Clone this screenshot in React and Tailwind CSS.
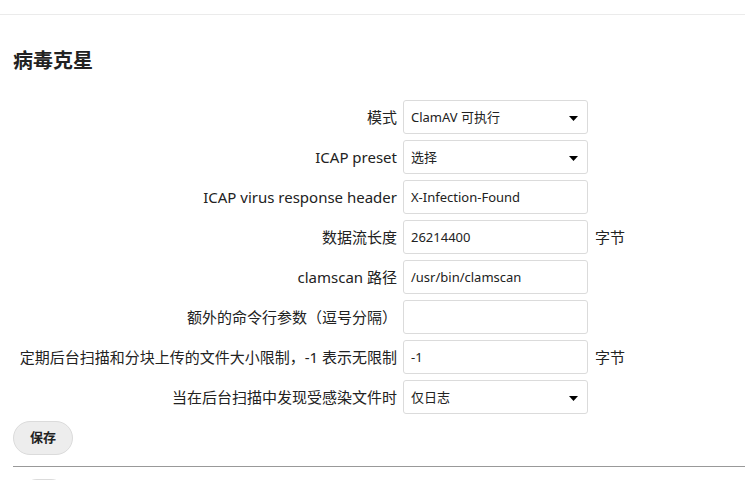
import React from "react";

const Caret = () => (
    <svg width="9" height="5" viewBox="0 0 9 5" className="absolute right-[9px] top-[15px]">
        <path d="M0 0h9L4.5 5z" fill="#000" />
    </svg>
);

const Field = ({ label, value, select, unit }) => (
    <div className="flex items-center">
        <label className="w-[396px] pr-[6px] text-right text-[15px] text-[#222]">{label}</label>
        <div className="relative my-[3px] flex h-[34px] w-[185px] items-center rounded-[3px] border border-[#dbdbdb] bg-white pl-[7px] pt-[1px] text-[13px] text-[#222]">
            <span>{value}</span>
            {select && <Caret />}
        </div>
        {unit && <span className="ml-[7px] text-[15px] text-[#222]">{unit}</span>}
    </div>
);

const fields = [
    { label: "模式", value: "ClamAV 可执行", select: true },
    { label: "ICAP preset", value: "选择", select: true },
    { label: "ICAP virus response header", value: "X-Infection-Found" },
    { label: "数据流长度", value: "26214400", unit: "字节" },
    { label: "clamscan 路径", value: "/usr/bin/clamscan" },
    { label: "额外的命令行参数（逗号分隔）", value: "" },
    { label: "定期后台扫描和分块上传的文件大小限制，-1 表示无限制", value: "-1", unit: "字节" },
    { label: "当在后台扫描中发现受感染文件时", value: "仅日志", select: true },
];

export default function App() {
    return (
        <div
            className="h-[480px] overflow-hidden bg-white"
            style={{ fontFamily: '"Noto Sans", "Noto Sans CJK SC", sans-serif' }}
        >
            <div className="h-[15px] border-b border-[#ebebeb]" />
            <div className="pl-[7px]">
                <h2 className="mt-[31px] ml-[6px] text-[20px] font-bold leading-[30px] text-[#222]">病毒克星</h2>
                <div className="mt-[21px]">
                    {fields.map((f, i) => (
                        <Field key={i} {...f} />
                    ))}
                </div>
                <button className="ml-[6px] mt-[4px] h-[34px] w-[60px] rounded-full border border-[#dbdbdb] bg-[#ededed] text-[13px] font-bold text-[#222]">
                    保存
                </button>
                <div className="ml-[6px] mt-[11px] border-t border-[#999]" />
                <div className="ml-[13px] mt-[12px] h-[34px] w-[48px] rounded-full border border-[#dbdbdb] bg-[#ededed]" />
            </div>
        </div>
    );
}
